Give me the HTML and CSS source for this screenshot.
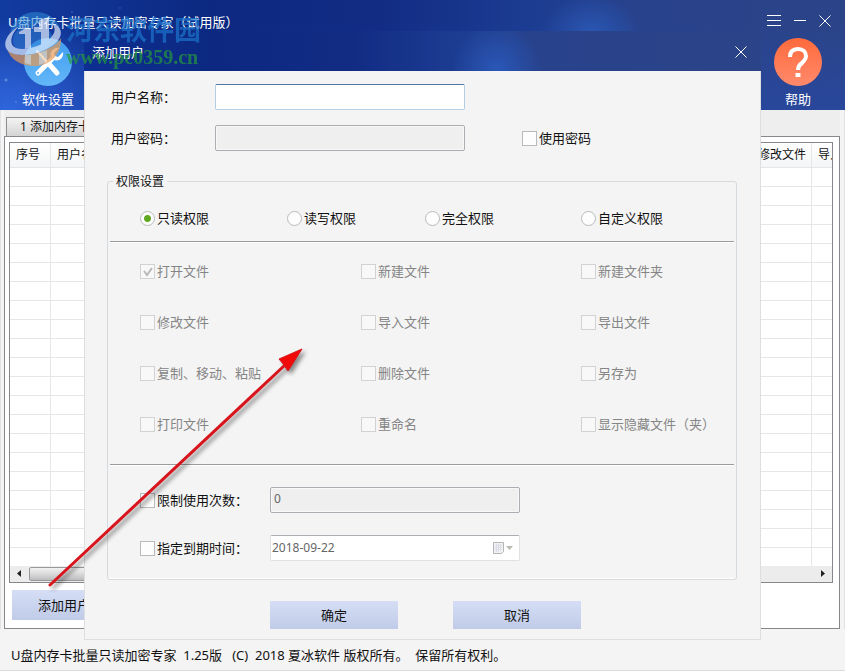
FILE: index.html
```html
<!DOCTYPE html>
<html lang="zh-CN">
<head>
    <meta charset="utf-8">
    <title>U盘内存卡批量只读加密专家</title>
    <link rel="stylesheet" href="styles.css">
</head>
<body>

<div class="window">
    <header class="banner">
        <div class="titlebar">
            <h1>U盘内存卡批量只读加密专家（试用版）</h1>
            <div class="winbtns">
                <button type="button" aria-label="菜单"><svg width="14" height="12" viewBox="0 0 14 12"><path d="M0 .5h14M0 5.500h14M0 10.500h14"/></svg></button>
                <button type="button" aria-label="最小化"><svg width="12" height="12" viewBox="0 0 12 12"><path d="M0 5.500h12"/></svg></button>
                <button type="button" aria-label="关闭"><svg width="12" height="12" viewBox="0 0 12 12"><path d="M.5.5l11 11M11.500.5l-11 11"/></svg></button>
            </div>
        </div>
        <nav class="toolbar">
            <a href="#settings" class="tool">
                <svg width="48" height="48" viewBox="0 0 48 48">
                    <defs><linearGradient id="blue" x1="0" y1="0" x2="0" y2="1"><stop offset="0" stop-color="#3f9bf0"/><stop offset="1" stop-color="#63b8f8"/></linearGradient></defs>
                    <circle cx="24" cy="24" r="24" fill="url(#blue)"/>
                    <g fill="none" stroke="#fff" stroke-linecap="round">
                        <path d="M13 13l11 12" stroke-width="2"/>
                        <path d="M25 26l8 9" stroke-width="5"/>
                        <path d="M14 35L29 20" stroke-width="5"/>
                    </g>
                    <path d="M35 10l-5 5 1 3 3 1 5-5c1 5-3 10-9 8l-3-3c-2-5 3-10 8-9z" fill="#fff"/>
                    <circle cx="14" cy="35" r="1" fill="#58aef5"/>
                </svg>
                <span>软件设置</span>
            </a>
            <a href="#help" class="tool">
                <svg width="48" height="48" viewBox="0 0 48 48">
                    <defs><linearGradient id="orange" x1="0" y1="0" x2="0" y2="1"><stop offset="0" stop-color="#ff6a3c"/><stop offset="1" stop-color="#ff8a6c"/></linearGradient></defs>
                    <circle cx="24" cy="24" r="24" fill="url(#orange)"/>
                    <path d="M16 19c0-6 3-8 8-8s8 3 8 7c0 3-2 5-4 7-3 2-4 4-4 7" fill="none" stroke="#fff" stroke-width="4"/>
                    <path d="M21.500 35h5v4h-5z" fill="#fff"/>
                </svg>
                <span>帮助</span>
            </a>
        </nav>
    </header>

    <main class="content">
        <div class="tabs"><button type="button" class="tab">1 添加内存卡</button></div>
        <div class="panel">
            <div class="list">
                <table>
                    <colgroup><col class="c-no"><col class="c-user"><col><col class="c-edit"><col class="c-import"></colgroup>
                    <thead>
                        <tr><th>序号</th><th>用户名称</th><th></th><th>修改文件</th><th>导入文件</th></tr>
                    </thead>
                    <tbody>
                        <tr><td></td><td></td><td></td><td></td><td></td></tr>
                        <tr><td></td><td></td><td></td><td></td><td></td></tr>
                        <tr><td></td><td></td><td></td><td></td><td></td></tr>
                        <tr><td></td><td></td><td></td><td></td><td></td></tr>
                        <tr><td></td><td></td><td></td><td></td><td></td></tr>
                        <tr><td></td><td></td><td></td><td></td><td></td></tr>
                        <tr><td></td><td></td><td></td><td></td><td></td></tr>
                        <tr><td></td><td></td><td></td><td></td><td></td></tr>
                        <tr><td></td><td></td><td></td><td></td><td></td></tr>
                        <tr><td></td><td></td><td></td><td></td><td></td></tr>
                        <tr><td></td><td></td><td></td><td></td><td></td></tr>
                        <tr><td></td><td></td><td></td><td></td><td></td></tr>
                        <tr><td></td><td></td><td></td><td></td><td></td></tr>
                        <tr><td></td><td></td><td></td><td></td><td></td></tr>
                        <tr><td></td><td></td><td></td><td></td><td></td></tr>
                        <tr><td></td><td></td><td></td><td></td><td></td></tr>
                        <tr><td></td><td></td><td></td><td></td><td></td></tr>
                        <tr><td></td><td></td><td></td><td></td><td></td></tr>
                        <tr><td></td><td></td><td></td><td></td><td></td></tr>
                        <tr><td></td><td></td><td></td><td></td><td></td></tr>
                        <tr><td></td><td></td><td></td><td></td><td></td></tr>
                    </tbody>
                </table>
                <div class="scrollbar">
                    <svg width="19" height="14" viewBox="0 0 19 14"><path d="M11 3v7L7 6.500z" fill="#222"/></svg>
                    <div class="thumb"></div>
                    <svg width="19" height="14" viewBox="0 0 19 14"><path d="M8 3v7l4-3.500z" fill="#222"/></svg>
                </div>
            </div>
            <button type="button" class="btn add">添加用户</button>
        </div>
    </main>

    <footer class="copyright">U盘内存卡批量只读加密专家  1.25版   (C)  2018 夏冰软件 版权所有。  保留所有权利。</footer>

    <section class="dialog" role="dialog" aria-labelledby="dlg-title">
        <div class="dialog-title">
            <h2 id="dlg-title">添加用户</h2>
            <button type="button" aria-label="关闭"><svg width="12" height="12" viewBox="0 0 12 12"><path d="M.5.5l11 11M11.500.5l-11 11"/></svg></button>
        </div>
        <form class="dialog-body">
            <div class="row">
                <label for="username">用户名称：</label>
                <input type="text" id="username" class="text active">
            </div>
            <div class="row">
                <label for="password">用户密码：</label>
                <input type="password" id="password" class="text" disabled>
                <label class="check"><input type="checkbox">使用密码</label>
            </div>

            <fieldset>
                <legend>权限设置</legend>
                <div class="modes">
                    <label class="check"><input type="radio" name="mode" checked>只读权限</label>
                    <label class="check"><input type="radio" name="mode">读写权限</label>
                    <label class="check"><input type="radio" name="mode">完全权限</label>
                    <label class="check"><input type="radio" name="mode">自定义权限</label>
                </div>
                <div class="rights">
                    <label class="check"><input type="checkbox" checked disabled>打开文件</label>
                    <label class="check"><input type="checkbox" disabled>新建文件</label>
                    <label class="check"><input type="checkbox" disabled>新建文件夹</label>
                    <label class="check"><input type="checkbox" disabled>修改文件</label>
                    <label class="check"><input type="checkbox" disabled>导入文件</label>
                    <label class="check"><input type="checkbox" disabled>导出文件</label>
                    <label class="check"><input type="checkbox" disabled>复制、移动、粘贴</label>
                    <label class="check"><input type="checkbox" disabled>删除文件</label>
                    <label class="check"><input type="checkbox" disabled>另存为</label>
                    <label class="check"><input type="checkbox" disabled>打印文件</label>
                    <label class="check"><input type="checkbox" disabled>重命名</label>
                    <label class="check"><input type="checkbox" disabled>显示隐藏文件（夹）</label>
                </div>
                <div class="limits">
                    <label class="check"><input type="checkbox">限制使用次数：</label>
                    <input type="text" class="text" value="0" aria-label="使用次数" disabled>
                    <label class="check"><input type="checkbox">指定到期时间：</label>
                    <div class="text date">
                        <input type="text" value="2018-09-22" aria-label="到期时间" disabled>
                        <svg width="23" height="14" viewBox="0 0 23 14">
                            <path d="M1.500 1.500h10v9l-2 2h-8z" fill="#f2f2f4" stroke="#b4b4b4"/>
                            <path d="M3 4.500h7M3 6.500h7M3 8.500h6M4.500 3v8M6.500 3v8M8.500 3v7" stroke="#dcdde6"/>
                            <path d="M14 5h7l-3.500 4z" fill="#b9bbb0"/>
                        </svg>
                    </div>
                </div>
            </fieldset>

            <div class="actions">
                <button type="button" class="btn">确定</button>
                <button type="button" class="btn">取消</button>
            </div>
        </form>
    </section>

    <div class="watermark">
        <svg width="58" height="56" viewBox="0 0 58 56">
            <path d="M5 20C9 6 20 0 30 0c12 0 22 6 25 17L44 12C30 10 14 14 5 20z" fill="#2f8fd8" opacity=".75"/>
            <ellipse cx="28" cy="28" rx="20" ry="16" fill="#2f7fd0" opacity=".7"/>
            <path d="M2 36c6 8 18 8 30 5 10-3 20-8 24-15 1 16-11 28-26 28C16 54 5 48 2 36z" fill="#e79a55"/>
            <path d="M14 14C4 20-2 29 1 36c4 9 22 8 34 4 14-5 24-14 20-23-2-4-5-5-8-6 4 5 4 11-4 17-9 7-24 11-32 8-8-3-5-14 3-22z" fill="#dfeafa"/>
            <path d="M14 20l7-4h5v20l-6 1V22h-6zM34 8l10-3v27l-8 3V20h-7v-5h5z" fill="#e4eefb"/>
            <path d="M20 43h6v10l-6-2zM34 41l8-3v12l-8 3z" fill="#f3cfae"/>
        </svg>
        <div>
            <p class="wm-name">河东软件园</p>
            <p class="wm-url">www.pc0359.cn</p>
        </div>
    </div>

    <svg class="arrow" width="262" height="250" viewBox="0 0 262 250">
        <path d="M5 240L240 20" stroke="#d8141c" stroke-width="3" stroke-linecap="round"/>
        <path d="M257 4l-14 22-4-6-5-6z" fill="#f00a0a" stroke="#d8141c"/>
    </svg>
</div>

</body>
</html>
```
FILE: styles.css
```css
* {
    box-sizing: border-box;
}
body {
    margin: 0;
    font-family: "Noto Sans", "Noto Sans CJK SC", sans-serif;
    font-size: 13px;
    line-height: 20px;
    color: #111;
}
h1, h2, p {
    margin: 0;
    font-size: 13px;
    font-weight: normal;
}
button, input {
    font: inherit;
    color: inherit;
}
button {
    border: 0;
    padding: 0;
    background: none;
}
svg {
    display: block;
}

.window {
    position: relative;
    display: flex;
    flex-direction: column;
    min-height: 100vh;
    background: #f4f4f4;
    border-bottom: 1px solid #d8dcde;
}

/* banner */
.banner {
    height: 110px;
    color: #fff;
    background:
        radial-gradient(circle at 6px 80px, #7fa6f0 0, transparent 2px),
        radial-gradient(circle at 16px 102px, #7fa6f0 0, transparent 1px),
        radial-gradient(circle at 72px 12px, #6088e0 0, transparent 1px),
        radial-gradient(circle at 120px 8px, #4a70d0 0, transparent 1px),
        radial-gradient(ellipse 120px 90px at 10px 110px, #2f66dc, transparent),
        radial-gradient(ellipse 50px 40px at 70% 34px, #2a58b4, transparent),
        linear-gradient(to bottom, transparent 20%, rgba(38, 78, 190, .35)),
        linear-gradient(to right, #123ba0, #0c2880 25%, #122c84 45%, #1c3c92 63%, #28428c 75%, #2b4488);
}
.titlebar, .toolbar {
    display: flex;
    justify-content: space-between;
}
.titlebar {
    height: 38px;
    padding: 12px 14px 0 8px;
}
.winbtns {
    display: flex;
    gap: 13px;
    height: 18px;
    align-items: center;
}
.winbtns path, .dialog-title path {
    fill: none;
    stroke: #fff;
}
.toolbar {
    padding: 0 23px 0 22px;
}
.tool {
    display: flex;
    flex-direction: column;
    align-items: center;
    gap: 3px;
    color: #fff;
    text-decoration: none;
}

/* list behind the dialog */
.content {
    flex: 1;
    display: flex;
    flex-direction: column;
    padding: 0 4px 0 3px;
    border: solid #e0e2e4;
    border-width: 0 1px;
}
.tabs {
    height: 26px;
    padding: 6px 0 0 2px;
    background: #eee;
}
.tab {
    height: 20px;
    padding: 0 13px;
    border: 1px solid #8c8e92;
    border-bottom: 0;
    background: linear-gradient(#f3f3f3, #d2d2d2);
    font-size: 12px;
    line-height: 18px;
}
.panel {
    flex: 1;
    padding: 5px 6px 8px 4px;
    border: 1px solid #85878a;
    background: #fff;
}
.list {
    border: 1px solid #85878a;
}
.list table {
    width: 100%;
    table-layout: fixed;
    border-collapse: separate;
    border-spacing: 0;
}
.list th, .list td {
    padding: 0 0 0 6px;
    border-right: 1px solid #e4e6e8;
    border-bottom: 1px solid #e4e6e8;
    overflow: hidden;
    white-space: nowrap;
}
.list th {
    height: 25px;
    background: linear-gradient(#fff, #f4f5f6);
    font-size: 12px;
    font-weight: normal;
    text-align: left;
}
.list td {
    height: 19px;
}
.list tr:last-child td {
    height: 18px;
    border-bottom: 0;
}
.list th:last-child, .list td:last-child {
    border-right: 0;
}
.c-no {
    width: 41px;
}
.c-user {
    width: 70px;
}
.c-edit {
    width: 60px;
}
.c-import {
    width: 20px;
}
.scrollbar {
    display: flex;
    align-items: center;
    height: 16px;
    background: #ececec;
}
.thumb {
    width: 60%;
    height: 14px;
    margin-right: auto;
    border: 1px solid #98999c;
    border-radius: 2px;
    background: linear-gradient(#f2f2f2, #dcdcdc 45%, #bdbdbd);
}
.btn {
    width: 128px;
    height: 28px;
    background: linear-gradient(#d5def5, #c0cbe8);
}
.add {
    width: 104px;
    height: 30px;
    margin: 7px 0 0 3px;
}
.copyright {
    height: 41px;
    padding: 16px 11px 0;
    white-space: pre;
}

/* dialog */
.dialog {
    position: absolute;
    top: 31px;
    left: 84px;
    right: 84px;
}
.dialog-title {
    display: flex;
    justify-content: space-between;
    align-items: center;
    height: 40px;
    padding: 2px 14px 0 8px;
    color: #fff;
    background:
        radial-gradient(ellipse 45px 50px at 61% 40px, #2a58b8, transparent),
        linear-gradient(to right, #0d2f92, #0c2880 20%, #122c84 40%, #1c3c92 55%, #28428c 66%, #2b4488);
}
.dialog-body {
    padding: 13px 23px 10px 22px;
    border: 1px solid #dcdedf;
    border-top: 0;
    background: #f4f4f4;
}
.row {
    display: grid;
    grid-template-columns: 104px 250px auto;
    justify-content: start;
    align-items: center;
    margin: 0 0 15px 4px;
}
.row .check {
    margin-left: 57px;
}
.text {
    width: 100%;
    height: 26px;
    padding: 0 3px;
    border: 1px solid #abadb3;
    border-radius: 2px;
    background: #fff;
    outline: 0;
}
.text.active {
    border-color: #4f78a8 #b0cfe6 #b5d3e8;
}
.text:disabled {
    padding-bottom: 4px;
    background: #efefef;
    box-shadow: inset 0 0 0 1px #f8f8f8;
    font-size: 12px;
    color: #666;
}
.check {
    display: flex;
    align-items: center;
    gap: 2px;
    white-space: nowrap;
}
.check input {
    appearance: none;
    flex: none;
    width: 15px;
    height: 15px;
    margin: 0;
    border: 1px solid #b8babc;
    background: #fdfdfd;
}
.check input[type=radio] {
    border-radius: 50%;
}
.check input[type=radio]:checked {
    background: radial-gradient(circle, #5fa820 0, #5fa820 3px, #fdfdfd 4px);
}
.check input:disabled {
    border-color: #d0d2d4;
    background: #f8f8f8;
}
.check input:disabled:checked {
    background: #f8f8f8 url("data:image/svg+xml,%3Csvg xmlns='http://www.w3.org/2000/svg' viewBox='0 0 13 13'%3E%3Cpath d='M3 6l3 4 5-7' fill='none' stroke='%23b8b8b8' stroke-width='2'/%3E%3C/svg%3E");
}
.check:has(input:disabled) {
    color: #858585;
}

fieldset {
    margin: 21px 0 0;
    padding: 0;
    border: 1px solid #d5dade;
    border-radius: 3px;
    box-shadow: inset 0 -1px #fff;
    min-width: 0;
}
legend {
    height: 18px;
    margin-left: 5px;
    padding: 0 3px;
    font-size: 12px;
    line-height: 20px;
}
.modes, .rights {
    display: grid;
    margin: 0 2px;
    border-bottom: 1px solid #999c9f;
    box-shadow: 0 1px #fff;
}
.modes {
    grid-template-columns: 147fr 138fr 156fr 153fr;
    padding: 18px 0 13px 30px;
}
.rights {
    grid-template-columns: 221fr 220fr 153fr;
    row-gap: 31px;
    padding: 19px 0 30px 30px;
}
.limits {
    display: grid;
    grid-template-columns: 130px 250px;
    row-gap: 22px;
    align-items: center;
    padding: 22px 0 18px 32px;
}
.date {
    display: flex;
    align-items: center;
    padding: 0 4px 0 1px;
    border-color: #abadb3 #dfe1e4 #dfe1e4;
}
.date input {
    flex: 1;
    min-width: 0;
    padding: 0;
    border: 0;
    background: none;
    font-size: 12px;
    color: #666;
}
.actions {
    display: flex;
    gap: 55px;
    margin: 21px 0 0 163px;
}

/* site mark and pointer drawn over everything */
.watermark {
    position: absolute;
    top: 12px;
    left: 5px;
    display: flex;
    gap: 3px;
    opacity: .7;
    pointer-events: none;
}
.wm-name {
    font-family: "Noto Sans CJK SC", sans-serif;
    font-size: 27px;
    font-weight: bold;
    line-height: 34px;
    color: #1b74cc;
}
.wm-url {
    font-family: "Liberation Serif", serif;
    font-size: 20px;
    font-weight: bold;
    line-height: 22px;
    color: #259a3c;
}
.arrow {
    position: absolute;
    top: 345px;
    left: 45px;
    fill: none;
    filter: drop-shadow(3px 3px 2px rgba(0, 0, 0, .45));
    pointer-events: none;
}
```
